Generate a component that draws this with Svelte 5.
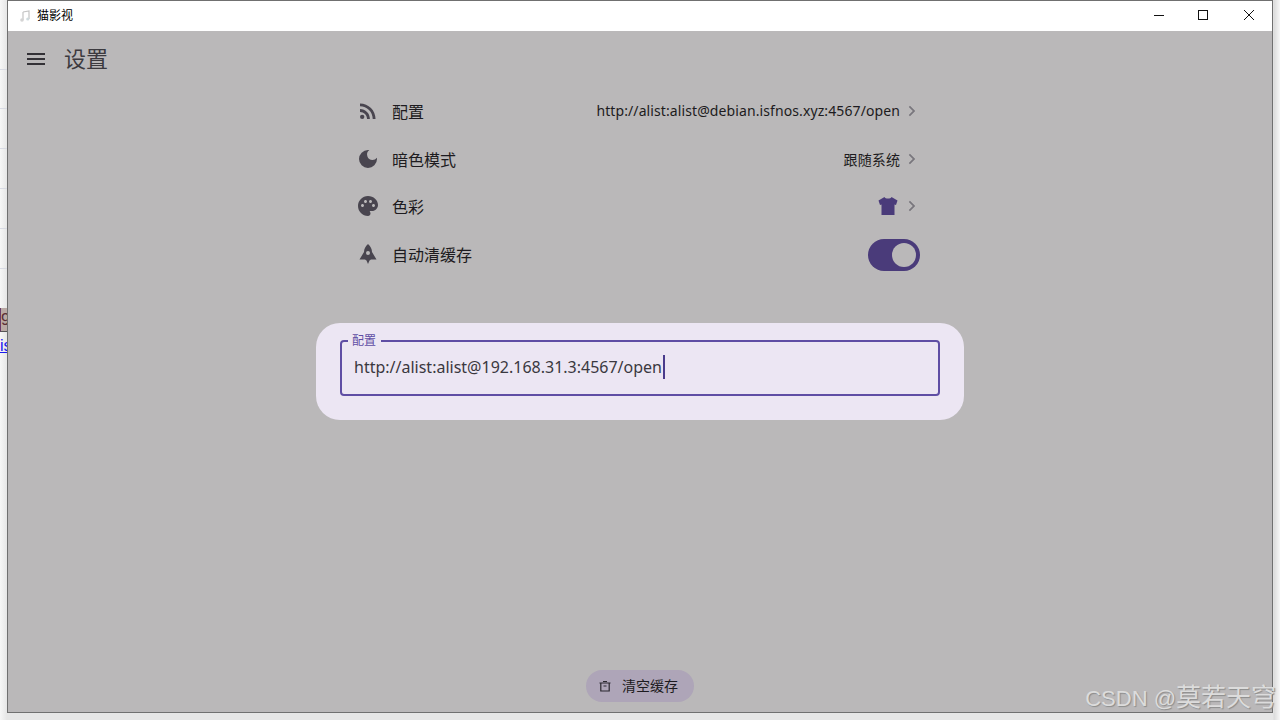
<script>
  const rows = [
    { id: "rss", label: "配置", value: "http://alist:alist@debian.isfnos.xyz:4567/open" },
    { id: "moon", label: "暗色模式", value: "跟随系统" },
    { id: "palette", label: "色彩", shirt: true },
    { id: "rocket", label: "自动清缓存", toggle: true },
  ];
  const stripLines = [69, 108, 148, 188, 228, 268];
  let address = "http://alist:alist@192.168.31.3:4567/open";
</script>

<div class="desktop">
  {#each stripLines as y}
    <i class="line" style="top: {y}px"></i>
  {/each}
  <span class="behind num"><em>19</em></span>
  <span class="behind link">is</span>

  <div class="window">
    <header class="titlebar">
      <svg class="app-icon" viewBox="0 0 12 12" width="12" height="12">
        <path d="M4 2 L10 1 V9" fill="none" stroke="#c4c4c4" stroke-width="1.2" />
        <path d="M4 2 V10" fill="none" stroke="#c4c4c4" stroke-width="1.2" />
        <circle cx="3" cy="10" r="1.8" fill="#d4d4d4" />
        <circle cx="8.8" cy="9" r="1.6" fill="#cfdadd" />
      </svg>
      <span class="app-name">猫影视</span>
      <div class="controls">
        <svg viewBox="0 0 46 30" width="46" height="30">
          <path d="M20 14.500 H30" stroke="#111" fill="none" />
        </svg>
        <svg viewBox="0 0 46 30" width="46" height="30">
          <rect x="18.500" y="9.500" width="9" height="9" stroke="#111" fill="none" />
        </svg>
        <svg viewBox="0 0 46 30" width="46" height="30">
          <path d="M18 9 L28 19 M28 9 L18 19" stroke="#111" fill="none" />
        </svg>
      </div>
    </header>

    <main class="content">
      <div class="appbar">
        <svg viewBox="0 0 24 24" width="24" height="24">
          <path d="M3 18h18v-2H3v2zm0-5h18v-2H3v2zm0-7v2h18V6H3z" fill="#333136" />
        </svg>
        <h1>设置</h1>
      </div>

      <section class="list">
        {#each rows as row}
          <div class="row">
            <svg class="lead" viewBox="0 0 24 24" width="24" height="24">
              {#if row.id === "rss"}
                <circle cx="6.180" cy="17.820" r="2.180" />
                <path d="M4 4.440v2.830c7.030 0 12.730 5.700 12.730 12.730h2.830c0-8.590-6.970-15.560-15.560-15.560zm0 5.660v2.830c3.900 0 7.070 3.170 7.070 7.070h2.830c0-5.470-4.430-9.900-9.900-9.900z" />
              {:else if row.id === "moon"}
                <path d="M12 3a9 9 0 1 0 9 9c0-.46-.04-.92-.1-1.360a5.390 5.390 0 0 1-4.400 2.260 5.400 5.400 0 0 1-3.140-9.800c-.44-.06-.9-.1-1.360-.1z" />
              {:else if row.id === "palette"}
                <path d="M12 2C6.490 2 2 6.490 2 12s4.490 10 10 10c1.380 0 2.500-1.120 2.500-2.500 0-.61-.23-1.200-.64-1.670-.08-.1-.13-.21-.13-.33 0-.28.22-.5.5-.5H16c3.310 0 6-2.690 6-6 0-4.960-4.490-9-10-9zm-5.500 11c-.83 0-1.500-.67-1.500-1.500S5.670 10 6.500 10s1.500.67 1.500 1.500S7.330 13 6.500 13zm3-4C8.670 9 8 8.330 8 7.500S8.670 6 9.500 6s1.500.67 1.500 1.500S10.330 9 9.500 9zm5 0c-.83 0-1.500-.67-1.500-1.500S13.670 6 14.500 6s1.500.67 1.500 1.500S15.330 9 14.500 9zm3 4c-.83 0-1.500-.67-1.500-1.500s.67-1.500 1.500-1.500 1.500.67 1.500 1.500-.67 1.500-1.500 1.500z" />
              {:else}
                <path d="M12 2c2.500 2 4 5 4 8l4.500 7.500H15c-.5.500-1 .8-1.500 1L12 22l-1.500-3.500c-.5-.2-1-.5-1.500-1H3.500L8 10c0-3 1.500-6 4-8zm0 7a2 2 0 1 0 0 4 2 2 0 0 0 0-4z" fill-rule="evenodd" />
              {/if}
            </svg>
            <span class="label">{row.label}</span>
            {#if row.value}
              <span class="value">{row.value}</span>
            {/if}
            {#if row.shirt}
              <svg class="shirt" viewBox="0 0 20 20" width="20" height="20">
                <path d="M6.500 1 L0.500 4.500 L2 9 L3.500 8.500 V19 H16.500 V8.500 L18 9 L19.500 4.500 L13.500 1 C12.800 3 7.200 3 6.500 1z" />
              </svg>
            {/if}
            {#if row.toggle}
              <span class="switch"><b></b></span>
            {:else}
              <svg class="chevron" viewBox="0 0 24 24" width="24" height="24">
                <path d="M9.700 6 8.300 7.400 12.900 12l-4.600 4.600L9.700 18l6-6z" />
              </svg>
            {/if}
          </div>
        {/each}
      </section>

      <section class="dialog">
        <div class="field">
          <span class="field-label">配置</span>
          <span class="field-text">{address}</span><span class="caret"></span>
        </div>
      </section>

      <button class="clear" type="button">
        <svg viewBox="0 0 12 12" width="12" height="12">
          <path d="M4 1.500 H8 M0.500 3 H11.500 M1.800 3.500 V11 H10.200 V3.500 M4.500 6 H7.500" fill="none" stroke="#2b2930" stroke-width="1.200" />
        </svg>
        <span>清空缓存</span>
      </button>
    </main>
  </div>

  <div class="watermark">CSDN @<span>莫若天穹</span></div>
</div>

<style>
  :global(body) {
    background: #f4f4f4;
  }

  .desktop {
    position: relative;
    width: 1280px;
    height: 720px;
    overflow: hidden;
    background: linear-gradient(90deg, #f7f7f7 0, #e6e6e6 7px, #e6e6e6 1273px, #dcdcdc 1274px, #f7f7f7 1280px);
    font-family: "Noto Sans", "Noto Sans CJK SC", sans-serif;
  }

  .line {
    position: absolute;
    left: 0;
    width: 8px;
    height: 1px;
    background: #d9dbe3;
  }

  .behind {
    position: absolute;
    left: 0;
    width: 8px;
    overflow: hidden;
    white-space: nowrap;
    font: 16px/20px "Liberation Sans", sans-serif;
  }

  .num {
    top: 308px;
    height: 24px;
    box-sizing: border-box;
    line-height: 24px;
    background: #b9a9a4;
    color: #5a2f36;
    border-left: 1px solid #6a3a6a;
    border-bottom: 1px solid #555;
  }

  .num em {
    font-style: normal;
    margin-left: -9px;
  }

  .link {
    top: 336px;
    color: #1a1aee;
    text-decoration: underline;
  }

  .window {
    position: absolute;
    left: 7px;
    top: 0;
    width: 1266px;
    height: 713px;
    box-sizing: border-box;
    border: 1px solid #707070;
    display: flex;
    flex-direction: column;
  }

  .titlebar {
    height: 30px;
    flex: none;
    background: #fff;
    display: flex;
    align-items: center;
    padding-left: 11px;
  }

  .app-icon {
    margin-right: 6px;
  }

  .app-name {
    font-size: 12px;
    margin-top: -2px;
    color: #000;
  }

  .controls {
    margin-left: auto;
    display: flex;
  }

  .content {
    flex: 1;
    background: #bab8b9;
    display: flex;
    flex-direction: column;
    align-items: center;
    color: #1d1b20;
  }

  .appbar {
    align-self: stretch;
    height: 56px;
    display: flex;
    align-items: center;
    gap: 16px;
    padding-left: 16px;
  }

  .appbar h1 {
    margin: -4px 0 0;
    font-size: 22px;
    font-weight: 400;
    color: #3c3a3f;
  }

  .list {
    width: 600px;
  }

  .row {
    height: 47.700px;
    padding: 0 16px;
    display: flex;
    align-items: center;
    font-size: 16px;
  }

  .lead {
    fill: #49454f;
    margin-right: 12px;
  }

  .label {
    flex: 1;
    color: #1d1b20;
  }

  .value {
    font-size: 14px;
    letter-spacing: 0.1px;
    color: #1d1b20;
  }

  .shirt {
    fill: #4a3b7a;
    margin-right: 2px;
  }

  .chevron {
    fill: #79767d;
    transform: scale(0.88);
  }

  .switch {
    width: 52px;
    height: 32px;
    margin: 2px 4px 0 0;
    box-sizing: border-box;
    border-radius: 16px;
    background: #4a3b7a;
    display: flex;
    align-items: center;
    justify-content: flex-end;
    padding-right: 4px;
  }

  .switch b {
    width: 24px;
    height: 24px;
    border-radius: 50%;
    background: #bab8b9;
  }

  .dialog {
    width: 648px;
    height: 97px;
    margin-top: 45px;
    box-sizing: border-box;
    border-radius: 24px;
    background: #ece6f3;
    padding: 17px 24px 0;
  }

  .field {
    position: relative;
    height: 56px;
    box-sizing: border-box;
    border: 2px solid #5f4ea4;
    border-radius: 4px;
    display: flex;
    align-items: center;
    padding-left: 12px;
    font-size: 16px;
    color: #3a3840;
  }

  .field-label {
    position: absolute;
    left: 6px;
    top: -9px;
    padding: 0 5px 0 4px;
    background: #ece6f3;
    font-size: 12px;
    line-height: 16px;
    color: #5f4ea4;
  }

  .field-text {
    margin-top: -2px;
  }

  .caret {
    width: 2px;
    height: 24px;
    margin: -2px 0 0 1px;
    background: #4a3b8c;
  }

  .clear {
    margin-top: auto;
    margin-bottom: 10px;
    width: 108px;
    height: 32px;
    border: 0;
    border-radius: 16px;
    background: #aea5b8;
    display: flex;
    align-items: center;
    gap: 11px;
    padding: 0 0 0 13px;
    font: inherit;
    font-size: 14px;
    color: #1d1b20;
  }

  .clear span {
    margin-top: -2px;
  }

  .watermark {
    position: absolute;
    right: 4px;
    top: 682px;
    font-family: "Liberation Sans", "Noto Sans CJK SC", sans-serif;
    font-size: 22px;
    line-height: 30px;
    color: #dcdcdc;
    text-shadow: 1px 1px 1px #8c8c8c;
    white-space: nowrap;
  }

  .watermark span {
    font-size: 25px;
  }
</style>
